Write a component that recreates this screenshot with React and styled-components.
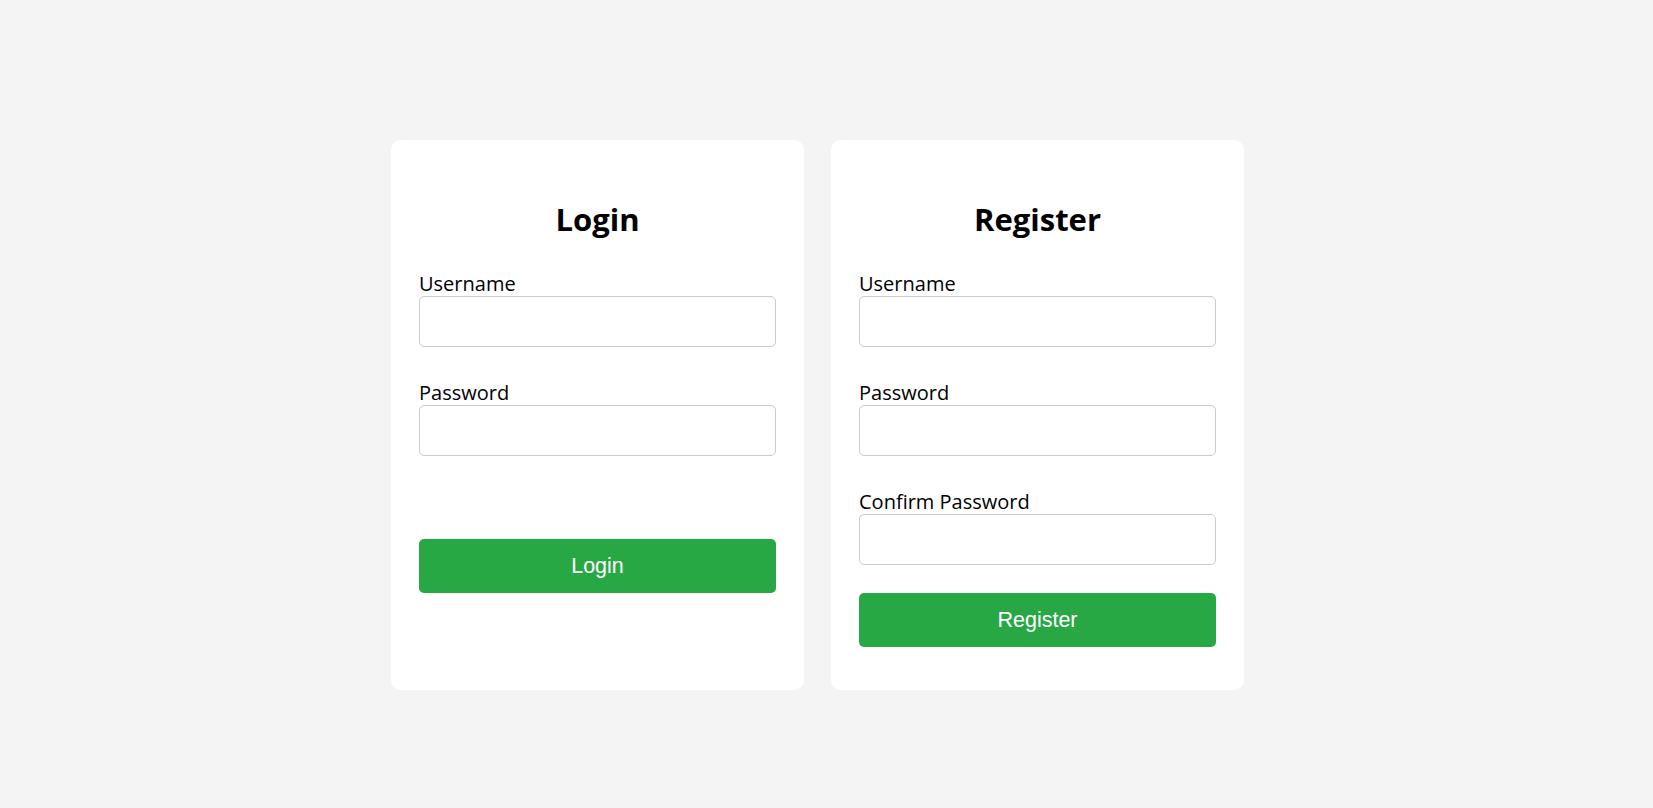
import styled, { createGlobalStyle } from "styled-components";

const GlobalStyle = createGlobalStyle`
  html, body {
    margin: 0;
    padding: 0;
    background-color: #f4f4f4;
  }
  body {
    font-family: "Open Sans", "Noto Sans", sans-serif;
    color: #000;
  }
`;

const fields = {
  login: ["Username", "Password"],
  register: ["Username", "Password", "Confirm Password"],
};

function AuthCard({ title, items, buttonGap }) {
  return (
    <Card>
      <Title>{title}</Title>
      <Form onSubmit={(e) => e.preventDefault()}>
        {items.map((label) => (
          <Field key={label}>
            <Label>{label}</Label>
            <Input type={label === "Username" ? "text" : "password"} />
          </Field>
        ))}
        <SubmitButton type="submit" $gap={buttonGap}>
          {title}
        </SubmitButton>
      </Form>
    </Card>
  );
}

export default function App() {
  return (
    <>
      <GlobalStyle />
      <Page>
        <AuthCard title="Login" items={fields.login} buttonGap={83} />
        <AuthCard title="Register" items={fields.register} buttonGap={28} />
      </Page>
    </>
  );
}

const Page = styled.div`
  display: flex;
  justify-content: center;
  align-items: stretch;
  gap: 27px;
  padding: 140px 18px 0 0;
`;

const Card = styled.div`
  width: 413px;
  box-sizing: border-box;
  background-color: #ffffff;
  border-radius: 10px;
  padding: 28px 28px 43px;
  display: flex;
  flex-direction: column;
`;

const Title = styled.h2`
  margin: 31px 0 32px;
  font-size: 31px;
  line-height: 40px;
  font-weight: 700;
  text-align: center;
`;

const Form = styled.form`
  display: flex;
  flex-direction: column;
`;

const Field = styled.div`
  display: flex;
  flex-direction: column;
  & + & {
    margin-top: 33px;
  }
`;

const Label = styled.label`
  font-size: 20px;
  line-height: 25px;
`;

const Input = styled.input`
  height: 51px;
  box-sizing: border-box;
  border: 1px solid #cccccc;
  border-radius: 5px;
  padding: 0 12px;
  font-size: 18px;
  outline: none;
`;

const SubmitButton = styled.button`
  margin-top: ${(p) => p.$gap}px;
  height: 54px;
  border: none;
  border-radius: 5px;
  background-color: #28a745;
  color: #ffffff;
  font-family: "Liberation Sans", Arial, sans-serif;
  font-size: 21.5px;
  cursor: pointer;
`;
